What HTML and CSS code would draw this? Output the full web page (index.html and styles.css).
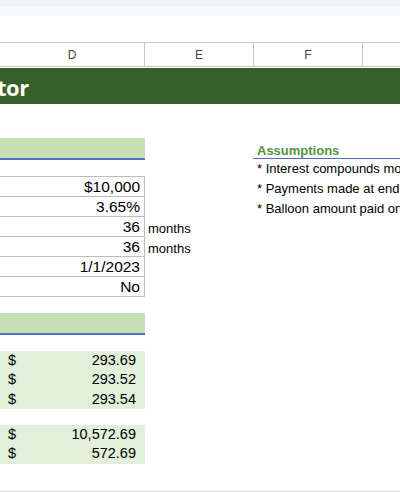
FILE: index.html
```html
<!DOCTYPE html>
<html>
<head>
<meta charset="utf-8">
<link rel="stylesheet" href="styles.css">
</head>
<body>
<div class="page">
  <div class="chrome-top"></div>
  <div class="chrome-sub"></div>
  <div class="colheads">
    <div class="colhead">D</div>
    <div class="colhead sep">E</div>
    <div class="colhead sep">F</div>
    <div class="colhead sep"></div>
  </div>
  <div class="titlebar"><span class="title">tor</span></div>
  <div class="content">
    <div class="col-d">
      <div class="sec-head"></div>
      <div class="inputs">
        <div class="in-row">$10,000</div>
        <div class="in-row">3.65%</div>
        <div class="in-row">36</div>
        <div class="in-row">36</div>
        <div class="in-row">1/1/2023</div>
        <div class="in-row">No</div>
      </div>
      <div class="sec-head sec-head-2"></div>
      <div class="results">
        <div class="res-row"><span>$</span><span>293.69</span></div>
        <div class="res-row"><span>$</span><span>293.52</span></div>
        <div class="res-row"><span>$</span><span>293.54</span></div>
      </div>
      <div class="results results-2">
        <div class="res-row"><span>$</span><span>10,572.69</span></div>
        <div class="res-row"><span>$</span><span>572.69</span></div>
      </div>
    </div>
    <div class="col-e">
      <div class="unit">months</div>
      <div class="unit">months</div>
    </div>
    <div class="col-f">
      <div class="assume-head">Assumptions</div>
      <div class="note">* Interest compounds monthly</div>
      <div class="note">* Payments made at end of period</div>
      <div class="note">* Balloon amount paid on final payment</div>
    </div>
  </div>
  <div class="bottom-line"></div>
</div>
</body>
</html>
```

FILE: styles.css
```css
html, body {
  margin: 0;
  padding: 0;
  background: #ffffff;
  overflow: hidden;
}

.page {
  width: 400px;
  height: 492px;
  display: flex;
  flex-direction: column;
  font-family: "Liberation Sans", Arial, sans-serif;
  color: #000;
  overflow: hidden;
}

.chrome-top {
  height: 6px;
  background: #eef1f6;
}

.chrome-sub {
  height: 10px;
  background: #f8f9fb;
  margin-bottom: 26px;
}

.colheads {
  display: grid;
  grid-template-columns: 144px 109px 109px 1fr;
  height: 23px;
  border-top: 1px solid #c8c8c8;
  border-bottom: 1px solid #c8c8c8;
}

.colhead {
  display: flex;
  align-items: center;
  justify-content: center;
  font-size: 12px;
  color: #444;
}

.colhead.sep {
  border-left: 1px solid #c8c8c8;
}

.titlebar {
  height: 36px;
  margin-top: 1px;
  background: #36602a;
  display: flex;
  align-items: center;
  overflow: hidden;
}

.title {
  font-family: "Open Sans", "Liberation Sans", sans-serif;
  font-weight: 700;
  font-size: 22px;
  letter-spacing: -0.5px;
  color: #ffffff;
  margin-left: -3px;
  line-height: 1;
  padding-top: 1px;
}

.content {
  display: flex;
  align-items: flex-start;
}

.col-d {
  width: 145px;
  flex: none;
  display: flex;
  flex-direction: column;
}

.sec-head {
  margin-top: 34px;
  height: 20px;
  background: #c6e0b4;
  border-bottom: 2px solid #4f74bd;
}

.sec-head-2 {
  margin-top: 16px;
}

.inputs {
  margin-top: 16px;
  border-top: 1px solid #bdbdbd;
  border-right: 1px solid #bdbdbd;
}

.in-row {
  height: 19px;
  line-height: 19px;
  border-bottom: 1px solid #bdbdbd;
  text-align: right;
  padding-right: 4px;
  font-size: 15.5px;
}

.results {
  margin-top: 16px;
  background: #e2efda;
}

.res-row {
  height: 19.33px;
  line-height: 19.33px;
  display: flex;
  justify-content: space-between;
  padding: 0 9px 0 8px;
  font-size: 14.5px;
}

.col-e {
  width: 108px;
  flex: none;
  margin-top: 113px;
  display: flex;
  flex-direction: column;
}

.unit {
  height: 20px;
  line-height: 19px;
  padding-top: 2px;
  box-sizing: border-box;
  padding-left: 3px;
  font-size: 13px;
}

.col-f {
  flex: 1;
  min-width: 0;
  margin-top: 39px;
  white-space: nowrap;
}

.assume-head {
  font-size: 13px;
  font-weight: 700;
  color: #559343;
  line-height: 15px;
  padding-left: 4px;
  border-bottom: 1px solid #4f74bd;
}

.note {
  font-size: 13px;
  line-height: 20px;
  padding-left: 4px;
}

.bottom-line {
  margin-top: auto;
  height: 1px;
  background: #dedede;
}
```
